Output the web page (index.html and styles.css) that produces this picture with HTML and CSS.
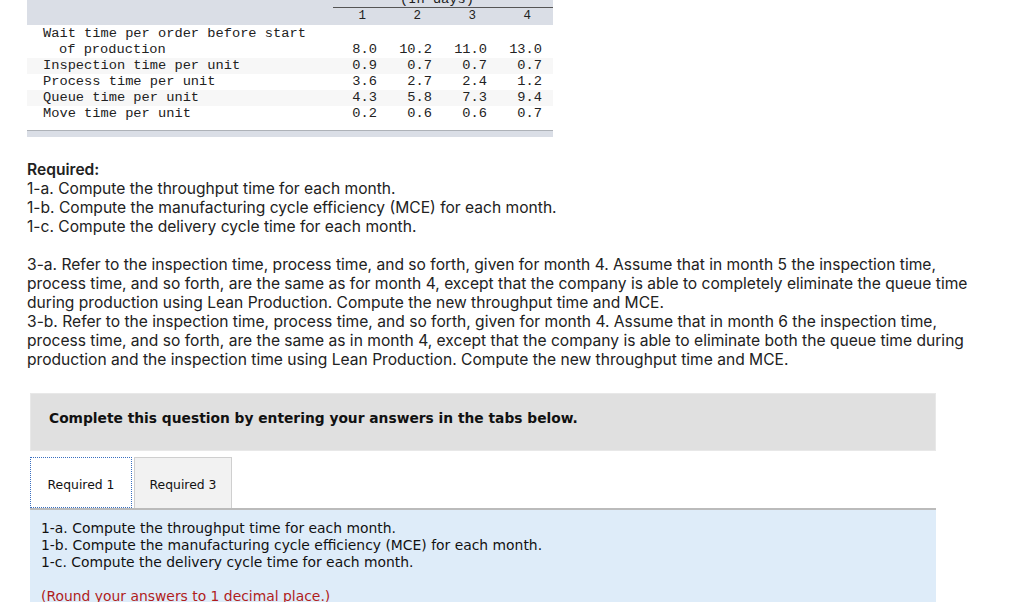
FILE: index.html
```html
<!DOCTYPE html>
<html>
<head>
<meta charset="utf-8">
<link rel="stylesheet" href="styles.css">
</head>
<body>
<div class="page">
  <div class="table-wrap">
    <table class="data">
      <colgroup>
        <col class="c-lbl"><col class="c-num"><col class="c-num"><col class="c-num"><col class="c-num">
      </colgroup>
      <thead>
        <tr class="unit-row">
          <th class="lbl"></th>
          <th colspan="4" class="unit"><span>(In days)</span></th>
        </tr>
        <tr class="num-row">
          <th class="lbl"></th>
          <th>1</th><th>2</th><th>3</th><th>4</th>
        </tr>
      </thead>
      <tbody>
        <tr>
          <td class="lbl">Wait time per order before start<br><span class="indent">of production</span></td>
          <td>8.0</td><td>10.2</td><td>11.0</td><td>13.0</td>
        </tr>
        <tr class="alt">
          <td class="lbl">Inspection time per unit</td>
          <td>0.9</td><td>0.7</td><td>0.7</td><td>0.7</td>
        </tr>
        <tr>
          <td class="lbl">Process time per unit</td>
          <td>3.6</td><td>2.7</td><td>2.4</td><td>1.2</td>
        </tr>
        <tr class="alt">
          <td class="lbl">Queue time per unit</td>
          <td>4.3</td><td>5.8</td><td>7.3</td><td>9.4</td>
        </tr>
        <tr class="last">
          <td class="lbl">Move time per unit</td>
          <td>0.2</td><td>0.6</td><td>0.6</td><td>0.7</td>
        </tr>
      </tbody>
    </table>
    <div class="table-foot"></div>
  </div>

  <div class="question">
    <p class="req"><strong>Required:</strong><br>
    1-a. Compute the throughput time for each month.<br>
    1-b. Compute the manufacturing cycle efficiency (MCE) for each month.<br>
    1-c. Compute the delivery cycle time for each month.</p>
    <p class="req">3-a. Refer to the inspection time, process time, and so forth, given for month 4. Assume that in month 5 the inspection time, process time, and so forth, are the same as for month 4, except that the company is able to completely eliminate the queue time during production using Lean Production. Compute the new throughput time and MCE.<br>
    3-b. Refer to the inspection time, process time, and so forth, given for month 4. Assume that in month 6 the inspection time, process time, and so forth, are the same as in month 4, except that the company is able to eliminate both the queue time during production and the inspection time using Lean Production. Compute the new throughput time and MCE.</p>
  </div>

  <div class="notice">Complete this question by entering your answers in the tabs below.</div>

  <div class="tabs">
    <div class="tab active">Required 1</div>
    <div class="tab">Required 3</div>
  </div>
  <div class="panel">
    <p>1-a. Compute the throughput time for each month.<br>
    1-b. Compute the manufacturing cycle efficiency (MCE) for each month.<br>
    1-c. Compute the delivery cycle time for each month.</p>
    <p class="round">(Round your answers to 1 decimal place.)</p>
  </div>
</div>
</body>
</html>
```

FILE: styles.css
```css
html, body {
  margin: 0;
  padding: 0;
  background: #fff;
}
body {
  overflow: hidden;
  height: 602px;
}
.page {
  padding-left: 27px;
  width: 960px;
}
.table-wrap {
  width: 526px;
  margin-top: -11px;
}
.data {
  border-collapse: collapse;
  width: 526px;
  table-layout: fixed;
  font-family: "Liberation Mono", "Courier New", monospace;
  font-size: 13.7px;
  color: #222;
}
.c-lbl { width: 306px; }
.c-num { width: 55px; }
.data th, .data td {
  padding: 0;
  font-weight: normal;
  line-height: 16px;
  white-space: nowrap;
  box-sizing: border-box;
}
.data td {
  text-align: right;
  padding-right: 11px;
}
.data .lbl {
  text-align: left;
  padding-left: 16px;
  padding-right: 0;
}
.data thead tr {
  background: #dadee6;
}
.unit-row th {
  height: 18px;
  vertical-align: bottom;
}
.unit-row .unit {
  text-align: center;
  border-bottom: 1px solid #555;
  line-height: 14px;
}
.unit-row .unit span {
  position: relative;
  left: -6px;
}
.num-row th {
  text-align: right;
  padding-right: 22px;
  height: 17px;
  line-height: 17px;
  font-size: 12.5px;
}
.num-row th.lbl {
  padding: 0;
}
.data tbody tr:first-child td {
  padding-top: 1px;
  vertical-align: bottom;
}
.data tr.alt td {
  background: #f7f7f7;
}
.data tr.last td {
  padding-bottom: 8px;
}
.indent {
  padding-left: 16px;
}
.table-foot {
  height: 6px;
  border-top: 1px solid #aeb2b8;
  background: #dadee6;
}

.question {
  font-family: "Inter", "Open Sans", "Liberation Sans", Arial, sans-serif;
  font-size: 15.6px;
  line-height: 19px;
  color: #222;
  margin-top: 23px;
  width: 952px;
}
.question p {
  margin: 0 0 19px 0;
}
.question strong {
  font-weight: 600;
}

.notice {
  margin: 24px 0 0 3px;
  width: 906px;
  height: 58px;
  box-sizing: border-box;
  background: #e0e0e0;
  border: 1px solid #e8e8e8;
  padding: 15px 0 0 18px;
  font-family: "DejaVu Sans", Verdana, sans-serif;
  font-weight: bold;
  font-size: 13.8px;
  line-height: 18px;
  color: #111;
}

.tabs {
  display: flex;
  margin: 6px 0 0 3px;
  width: 906px;
  border-bottom: 2px solid #bbbbbb;
}
.tab {
  height: 51px;
  box-sizing: border-box;
  display: flex;
  align-items: center;
  justify-content: center;
  padding-top: 4px;
  font-family: "DejaVu Sans", Verdana, sans-serif;
  font-size: 12.4px;
  color: #111;
}
.tab.active {
  width: 102px;
  background: #fff;
  border: 1px dotted #3a6fc0;
}
.tab:not(.active) {
  width: 98px;
  margin-left: 2px;
  background: #f2f2f2;
  border: 1px solid #cfcfcf;
  border-bottom: none;
}

.panel {
  margin-left: 3px;
  width: 906px;
  height: 100px;
  box-sizing: border-box;
  background: #deecf9;
  padding: 10px 0 0 11px;
  font-family: "DejaVu Sans", Verdana, sans-serif;
  font-size: 13.9px;
  line-height: 17px;
  color: #111;
}
.panel p {
  margin: 0 0 17px 0;
}
.panel .round {
  color: #b01c1c;
}
```
